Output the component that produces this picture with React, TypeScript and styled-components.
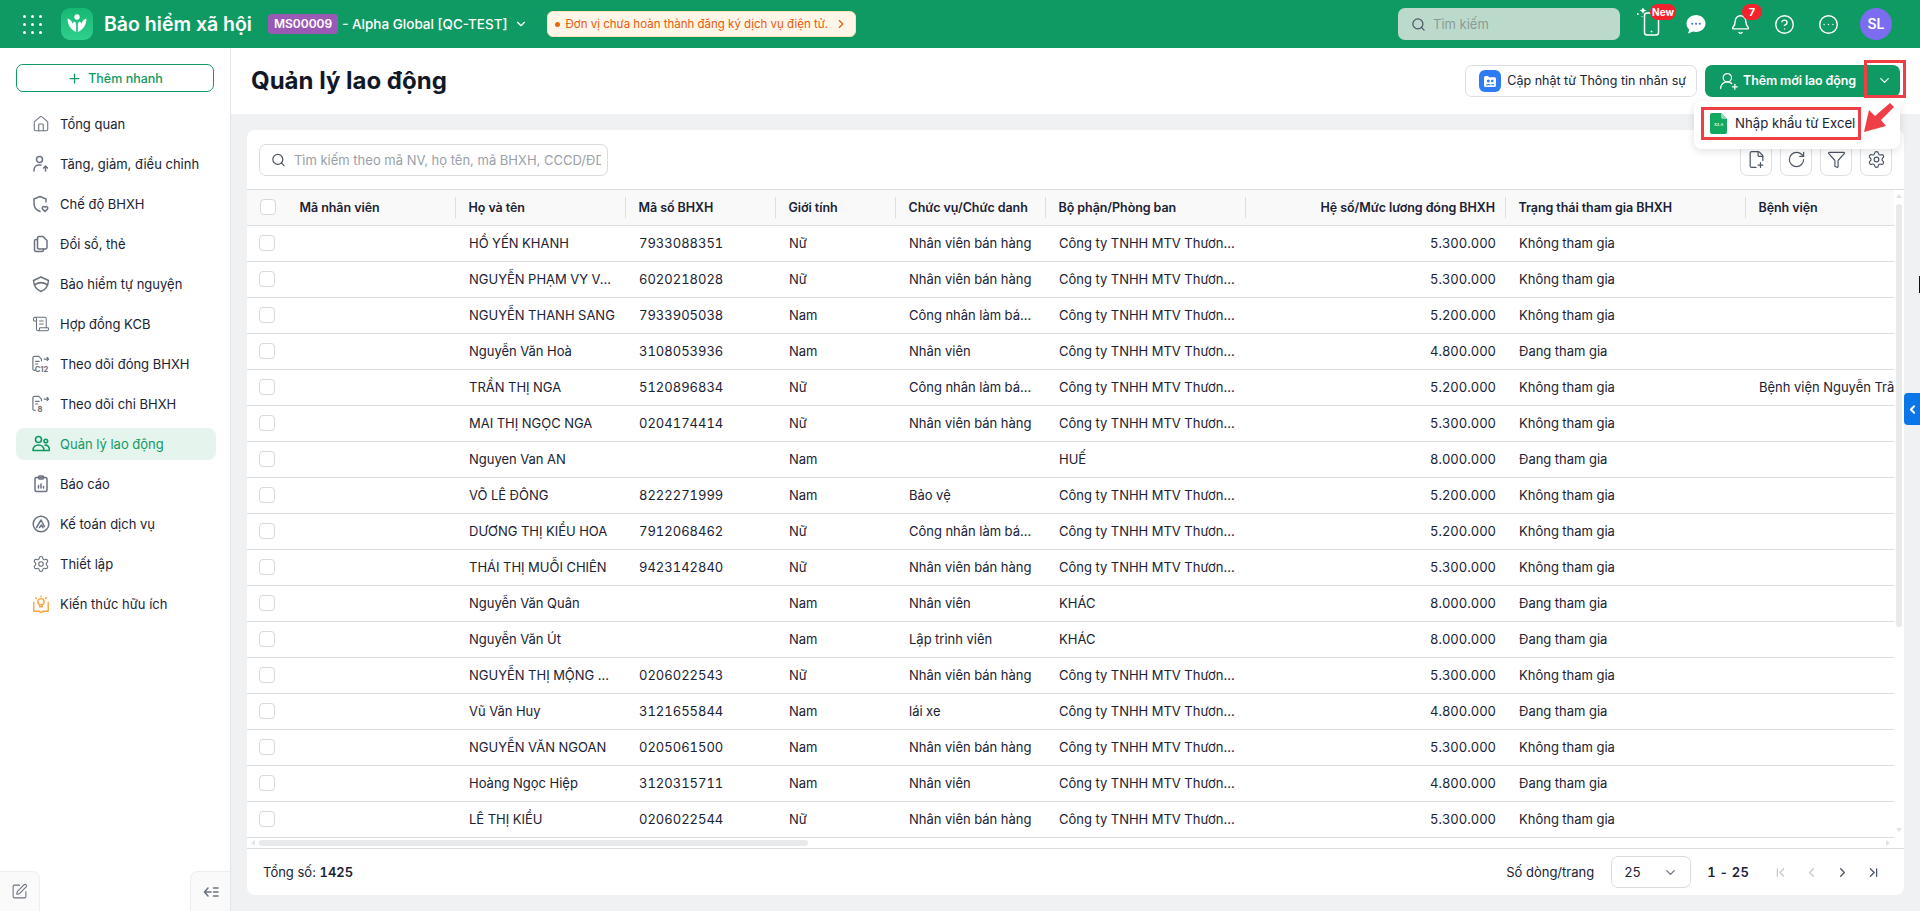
import React from 'react';
import styled, { createGlobalStyle } from 'styled-components';
import {
  Bell,
  ChevronDown,
  ChevronFirst,
  ChevronLast,
  ChevronLeft,
  ChevronRight,
  CircleEllipsis,
  CircleHelp,
  FilePlus2,
  Filter,
  House,
  Plus,
  RotateCw,
  ScrollText,
  Search,
  Settings,
  SquarePen,
  UserRoundPlus,
} from 'lucide-react';

const NVBH = 'Nhân viên bán hàng';
const CNLB = 'Công nhân làm bán hàng';
const NV = 'Nhân viên';
const CTY = 'Công ty TNHH MTV Thương mại';
const KTG = 'Không tham gia';
const DTG = 'Đang tham gia';

type Employee = [string, string, string, string, string, string, string, string?];

const employees: Employee[] = [
  ['HỒ YẾN KHANH', '7933088351', 'Nữ', NVBH, CTY, '5.300.000', KTG],
  ['NGUYỄN PHẠM VY VÂN', '6020218028', 'Nữ', NVBH, CTY, '5.300.000', KTG],
  ['NGUYỄN THANH SANG', '7933905038', 'Nam', CNLB, CTY, '5.200.000', KTG],
  ['Nguyễn Văn Hoà', '3108053936', 'Nam', NV, CTY, '4.800.000', DTG],
  ['TRẦN THỊ NGA', '5120896834', 'Nữ', CNLB, CTY, '5.200.000', KTG, 'Bệnh viện Nguyễn Trãi'],
  ['MAI THỊ NGỌC NGA', '0204174414', 'Nữ', NVBH, CTY, '5.300.000', KTG],
  ['Nguyen Van AN', '', 'Nam', '', 'HUẾ', '8.000.000', DTG],
  ['VÕ LÊ ĐÔNG', '8222271999', 'Nam', 'Bảo vệ', CTY, '5.200.000', KTG],
  ['DƯƠNG THỊ KIỀU HOA', '7912068462', 'Nữ', CNLB, CTY, '5.200.000', KTG],
  ['THÁI THỊ MUỖI CHIÊN', '9423142840', 'Nữ', NVBH, CTY, '5.300.000', KTG],
  ['Nguyễn Văn Quân', '', 'Nam', NV, 'KHÁC', '8.000.000', DTG],
  ['Nguyễn Văn Út', '', 'Nam', 'Lập trình viên', 'KHÁC', '8.000.000', DTG],
  ['NGUYỄN THỊ MỘNG TUYỀN', '0206022543', 'Nữ', NVBH, CTY, '5.300.000', KTG],
  ['Vũ Văn Huy', '3121655844', 'Nam', 'lái xe', CTY, '4.800.000', DTG],
  ['NGUYỄN VĂN NGOAN', '0205061500', 'Nam', NVBH, CTY, '5.300.000', KTG],
  ['Hoàng Ngọc Hiệp', '3120315711', 'Nam', NV, CTY, '4.800.000', DTG],
  ['LÊ THỊ KIỀU', '0206022544', 'Nữ', NVBH, CTY, '5.300.000', KTG],
];

const columnWidths = [40, 169, 170, 150, 120, 150, 200, 260, 240, 220];

const line = { fill: 'none', stroke: 'currentColor', strokeWidth: 1.5, strokeLinecap: 'round', strokeLinejoin: 'round' } as const;

const UserUpIcon = () => (
  <svg width="18" height="18" viewBox="0 0 18 18" {...line}>
    <circle cx="7.5" cy="4.5" r="3" />
    <path d="M2 16v-1.5A5 5 0 0 1 7 10h2" />
    <path d="M13.5 16v-5M11.5 13l2-2 2 2" />
  </svg>
);

const ShieldHeartIcon = () => (
  <svg width="18" height="18" viewBox="0 0 18 18" {...line}>
    <path d="M8 16.5C4 15 2 12 2 8.5V4l6-2.5L14 4v3" />
    <path d="M13 16.5l-2.6-2.6a1.6 1.6 0 0 1 2.6-1.8 1.6 1.6 0 0 1 2.6 1.8z" />
  </svg>
);

const BooksIcon = () => (
  <svg width="18" height="18" viewBox="0 0 18 18" {...line}>
    <path d="M7 1.5h4l4 4v7a1.5 1.5 0 0 1-1.5 1.5H7a1.5 1.5 0 0 1-1.5-1.5V3A1.5 1.5 0 0 1 7 1.5z" />
    <path d="M5.5 4.5H4A1.5 1.5 0 0 0 2.5 6v9A1.5 1.5 0 0 0 4 16.5h6a1.5 1.5 0 0 0 1.5-1.5v-1" />
  </svg>
);

const ShieldIcon = () => (
  <svg width="18" height="18" viewBox="0 0 18 18" {...line}>
    <path d="M9 16.5C5 15 2 12 1.5 5.5L9 2l7.5 3.5C16 12 13 15 9 16.5z" />
    <path d="M3 9.5c4-2.5 8-2.5 12 0" />
  </svg>
);

const FileCodeIcon = ({ code, textX }: { code: string; textX: number }) => (
  <svg width="20" height="20" viewBox="0 0 20 20" {...line} strokeWidth={1.3}>
    <path d="M3.5 17h-1A1.5 1.5 0 0 1 1 15.5V3a1.5 1.5 0 0 1 1.5-1.5h5l3 3v2" />
    <path d="M4 7h4M4 10h2.5M13.5 4.5h5M16.8 2.8l1.7 1.7-1.7 1.7" />
    <text x={textX} y="18.5" fontSize="8.5" fontWeight="700" fill="currentColor" stroke="none" fontFamily="Inter, sans-serif">
      {code}
    </text>
  </svg>
);

const ReportIcon = () => (
  <svg width="18" height="18" viewBox="0 0 18 18" {...line}>
    <rect x="3" y="2.5" width="12" height="14" rx="1.5" />
    <rect x="6.5" y="1" width="5" height="3" rx="1" />
    <path d="M6.5 13v-2.5M9 13V9M11.5 13v-1.5" />
  </svg>
);

const AccountingIcon = () => (
  <svg width="18" height="18" viewBox="0 0 18 18" {...line}>
    <circle cx="9" cy="9" r="7.8" />
    <path d="M4.5 12.5L9 5l3.5 6.5M7.5 12.5l2-2.5 1.5 2.5" />
  </svg>
);

const KnowledgeIcon = () => (
  <svg width="20" height="20" viewBox="0 0 20 20" {...line} stroke="#f9a23b">
    <circle cx="10" cy="7.5" r="3.5" />
    <path d="M8.5 11v2h3v-2M10 1v1M4 3l1 1M16 3l-1 1" />
    <path d="M2 8v10h6.5a1.5 1.5 0 0 0 3 0H18V8" />
  </svg>
);

const WorkersIcon = () => (
  <svg width="18" height="18" viewBox="0 0 18 18" {...line} strokeWidth={1.6}>
    <circle cx="6.5" cy="4.5" r="3" />
    <circle cx="13.8" cy="6" r="1.8" />
    <path d="M1 15.5c0-3.5 2.5-5.5 5.5-5.5s5.5 2 5.5 5.5z" />
    <path d="M13 10.2c2.5-.3 4.5 1.5 4.5 5.3H12" />
  </svg>
);

const CollapseIcon = () => (
  <svg width="16" height="14" viewBox="0 0 16 14" {...line}>
    <path d="M5 3L1.5 7 5 11M1.5 7H8M10.5 3H15M10.5 7H15M10.5 11H15" />
  </svg>
);

const ChatIcon = () => (
  <svg width="20" height="20" viewBox="0 0 20 20">
    <path d="M10 1c5.2 0 9.5 3.7 9.5 8.5S15.2 18 10 18c-1 0-2-.1-2.9-.4L2 19.5l1.3-4C1.4 14 .5 12 .5 9.5.5 4.7 4.8 1 10 1z" fill="#fff" />
    <circle cx="6.2" cy="9.7" r="1" fill="#3568ee" />
    <circle cx="10" cy="9.7" r="1" fill="#3568ee" />
    <circle cx="13.8" cy="9.7" r="1" fill="#3568ee" />
  </svg>
);

const PhoneSparkIcon = () => (
  <svg width="30" height="32" viewBox="0 0 30 32" fill="none">
    <rect x="7.5" y="5" width="14" height="22" rx="2.5" stroke="#fff" strokeWidth="1.5" />
    <path d="M14.5 22.5v2M13.5 23.5h2" stroke="#fff" strokeWidth="0.8" />
    <path d="M6 -1l1 2.5 2.5 1-2.5 1-1 2.5-1-2.5-2.5-1 2.5-1z" fill="#fff" />
    <circle cx="0.8" cy="6" r="1" fill="#fff" />
    <circle cx="5" cy="8.5" r="0.6" fill="#fff" />
  </svg>
);

const LogoMark = () => (
  <svg width="22" height="22" viewBox="0 0 22 22" fill="#fff">
    <circle cx="11" cy="4" r="2.7" />
    <path d="M1.5 5.5c2.8.8 4.5 3 5 5.2.5-.9 1.2-1.7 2-2.1.9.6 1.6 1.5 1.6 2.9v7.500C6.200 17.500 1.500 13 1.500 5.500z" />
    <path d="M20.500 5.500c-2.800.8-4.500 3-5 5.200-.5-.9-1.200-1.700-2-2.100-.9.600-1.600 1.500-1.600 2.900v7.500c3.900-1.500 8.600-6 8.600-13.500z" />
  </svg>
);

const ContactsIcon = () => (
  <svg width="22" height="22" viewBox="0 0 22 22">
    <rect width="22" height="22" rx="6" fill="#2f7bf5" />
    <path d="M5 7.5A1.5 1.5 0 0 1 6.5 6H9l1.2 1.3h5.3A1.5 1.5 0 0 1 17 8.8v6.700a1.500 1.500 0 0 1-1.500 1.500h-9A1.500 1.500 0 0 1 5 15.500z" fill="#fff" />
    <circle cx="9.3" cy="11" r="1.5" fill="#2f7bf5" />
    <circle cx="13.3" cy="11" r="1.3" fill="#2f7bf5" />
    <path d="M6.8 15.3c.4-1.8 4.6-1.8 5 0zM12.5 15.3h2.8c-.2-1.4-1.9-1.7-3.1-1z" fill="#2f7bf5" />
  </svg>
);

const ExcelIcon = () => (
  <svg width="17" height="21" viewBox="0 0 17 21">
    <path d="M2 0h9l6 6v13a2 2 0 0 1-2 2H2a2 2 0 0 1-2-2V2a2 2 0 0 1 2-2z" fill="#12a85f" />
    <path d="M11 0l6 6h-4a2 2 0 0 1-2-2z" fill="#8adbb1" />
    <text x="8.5" y="13" textAnchor="middle" fontSize="5" fontWeight="700" fill="#d8f5e6" fontFamily="Liberation Serif, serif">
      XLS
    </text>
  </svg>
);

const AppsIcon = () => (
  <AppsGrid>
    {Array.from({ length: 9 }, (_, i) => (
      <i key={i} />
    ))}
  </AppsGrid>
);

type NavEntry = { label: string; icon: React.ReactNode; active?: boolean };

const navItems: NavEntry[] = [
  { label: 'Tổng quan', icon: <House size={18} strokeWidth={1.4} /> },
  { label: 'Tăng, giảm, điều chỉnh', icon: <UserUpIcon /> },
  { label: 'Chế độ BHXH', icon: <ShieldHeartIcon /> },
  { label: 'Đổi sổ, thẻ', icon: <BooksIcon /> },
  { label: 'Bảo hiểm tự nguyện', icon: <ShieldIcon /> },
  { label: 'Hợp đồng KCB', icon: <ScrollText size={18} strokeWidth={1.4} /> },
  { label: 'Theo dõi đóng BHXH', icon: <FileCodeIcon code="C12" textX={3} /> },
  { label: 'Theo dõi chi BHXH', icon: <FileCodeIcon code="8" textX={6} /> },
  { label: 'Quản lý lao động', icon: <WorkersIcon />, active: true },
  { label: 'Báo cáo', icon: <ReportIcon /> },
  { label: 'Kế toán dịch vụ', icon: <AccountingIcon /> },
  { label: 'Thiết lập', icon: <Settings size={18} strokeWidth={1.5} /> },
  { label: 'Kiến thức hữu ích', icon: <KnowledgeIcon /> },
];

const App: React.FC = () => (
  <Page>
    <GlobalStyle />
    <TopBar>
      <AppsIcon />
      <Logo>
        <LogoMark />
      </Logo>
      <Brand>Bảo hiểm xã hội</Brand>
      <UnitCode>MS00009</UnitCode>
      <UnitName>- Alpha Global [QC-TEST]</UnitName>
      <ChevronDown size={14} color="#fff" />
      <Notice>
        <NoticeDot />
        Đơn vị chưa hoàn thành đăng ký dịch vụ điện tử.
        <ChevronRight size={14} />
      </Notice>
      <TopSearch>
        <Search size={15} color="#4b5563" />
        Tìm kiếm
      </TopSearch>
      <TopIcons>
        <TopIcon>
          <PhoneSparkIcon />
          <RedBadge $wide>New</RedBadge>
        </TopIcon>
        <TopIcon>
          <ChatIcon />
        </TopIcon>
        <TopIcon>
          <Bell size={21} strokeWidth={1.6} />
          <RedBadge>7</RedBadge>
        </TopIcon>
        <TopIcon>
          <CircleHelp size={21} strokeWidth={1.6} />
        </TopIcon>
        <TopIcon>
          <CircleEllipsis size={21} strokeWidth={1.6} />
        </TopIcon>
      </TopIcons>
      <Avatar>SL</Avatar>
    </TopBar>

    <Body>
      <Sidebar>
        <QuickAdd>
          <Plus size={15} />
          Thêm nhanh
        </QuickAdd>
        <Nav>
          {navItems.map(item => (
            <NavItem key={item.label} $active={item.active}>
              <NavGlyph>{item.icon}</NavGlyph>
              {item.label}
            </NavItem>
          ))}
        </Nav>
        <SideFooter>
          <SideFooterButton $side="left">
            <SquarePen size={17} strokeWidth={1.5} />
          </SideFooterButton>
          <SideFooterButton $side="right">
            <CollapseIcon />
          </SideFooterButton>
        </SideFooter>
      </Sidebar>

      <Main>
        <TitleBar>
          <Title>Quản lý lao động</Title>
          <TitleActions>
            <OutlineButton>
              <ContactsIcon />
              Cập nhật từ Thông tin nhân sự
            </OutlineButton>
            <SplitButton>
              <SplitMain>
                <UserRoundPlus size={20} strokeWidth={1.5} />
                Thêm mới lao động
              </SplitMain>
              <SplitToggle>
                <ChevronDown size={15} />
              </SplitToggle>
              <ToggleMark />
            </SplitButton>
            <ImportMenu>
              <ImportItem>
                <ExcelIcon />
                Nhập khẩu từ Excel
              </ImportItem>
            </ImportMenu>
            <CalloutArrow width="30" height="30" viewBox="0 0 30 30">
              <path d="M26 0l4 4-13 13 5 6-22 6 5-22 6 6z" fill="#f03e46" />
            </CalloutArrow>
          </TitleActions>
        </TitleBar>

        <Content>
          <Card>
            <CardToolbar>
              <TableSearch>
                <Search size={16} color="#4b5563" />
                <TableSearchHint>Tìm kiếm theo mã NV, họ tên, mã BHXH, CCCD/ĐDCN</TableSearchHint>
              </TableSearch>
              <ToolGroup>
                <ToolButton><FilePlus2 size={19} strokeWidth={1.5} /></ToolButton>
                <ToolButton><RotateCw size={19} strokeWidth={1.5} /></ToolButton>
                <ToolButton><Filter size={19} strokeWidth={1.5} /></ToolButton>
                <ToolButton><Settings size={19} strokeWidth={1.5} /></ToolButton>
              </ToolGroup>
            </CardToolbar>

            <TableArea>
              <TableClip>
                <Table>
                  <colgroup>
                    {columnWidths.map((w, i) => (
                      <col key={i} style={{ width: w }} />
                    ))}
                  </colgroup>
                  <thead>
                    <tr>
                      <HeadCell $plain><Check /></HeadCell>
                      <HeadCell>Mã nhân viên</HeadCell>
                      <HeadCell>Họ và tên</HeadCell>
                      <HeadCell>Mã số BHXH</HeadCell>
                      <HeadCell>Giới tính</HeadCell>
                      <HeadCell>Chức vụ/Chức danh</HeadCell>
                      <HeadCell>Bộ phận/Phòng ban</HeadCell>
                      <HeadCell $right>Hệ số/Mức lương đóng BHXH</HeadCell>
                      <HeadCell>Trạng thái tham gia BHXH</HeadCell>
                      <HeadCell $plain>Bệnh viện</HeadCell>
                    </tr>
                  </thead>
                  <tbody>
                    {employees.map(([name, code, gender, role, dept, salary, status, hospital]) => (
                      <tr key={name}>
                        <Cell $box><Check /></Cell>
                        <Cell />
                        <Cell>{name}</Cell>
                        <Cell>{code}</Cell>
                        <Cell>{gender}</Cell>
                        <Cell>{role}</Cell>
                        <Cell>{dept}</Cell>
                        <Cell $right>{salary}</Cell>
                        <Cell>{status}</Cell>
                        <Cell $clip>{hospital}</Cell>
                      </tr>
                    ))}
                  </tbody>
                </Table>
              </TableClip>
              <VScroll>
                <ArrowUp />
                <VThumb />
                <ArrowDown />
              </VScroll>
            </TableArea>
            <HScroll>
              <ArrowLeft />
              <HThumb />
              <ArrowRight />
            </HScroll>

            <CardFooter>
              <Total>
                Tổng số: <b>1425</b>
              </Total>
              <Pager>
                Số dòng/trang
                <PageSize>
                  25
                  <ChevronDown size={15} color="#6b7280" />
                </PageSize>
                <PageRange>1 - 25</PageRange>
                <PageNav>
                  <ChevronFirst size={15} color="#c6c9cf" />
                  <ChevronLeft size={15} color="#c6c9cf" />
                  <ChevronRight size={15} color="#4b5563" />
                  <ChevronLast size={15} color="#4b5563" />
                </PageNav>
              </Pager>
            </CardFooter>
          </Card>
        </Content>
      </Main>
    </Body>

    <SideTab>
      <ChevronLeft size={13} strokeWidth={3.5} />
    </SideTab>
    <CaretMark />
  </Page>
);

export default App;

const GlobalStyle = createGlobalStyle`
  html, body {
    margin: 0;
    height: 100%;
    overflow: hidden;
  }

  * {
    box-sizing: border-box;
  }

  body {
    font-family: Inter, "Noto Sans", sans-serif;
    font-size: 13px;
    color: #1a2233;
    background: #fff;
  }
`;

const Page = styled.div`
  position: relative;
  display: flex;
  flex-direction: column;
  height: 100vh;
`;

const TopBar = styled.header`
  display: flex;
  align-items: center;
  flex: 0 0 48px;
  padding: 0 28px 0 23px;
  background: #0f9a63;
  color: #fff;
`;

const AppsGrid = styled.div`
  display: grid;
  grid-template-columns: repeat(3, 3px);
  gap: 5px;
  margin-right: 19px;

  & i {
    width: 3px;
    height: 3px;
    border-radius: 50%;
    background: #fff;
  }
`;

const Logo = styled.div`
  display: flex;
  align-items: center;
  justify-content: center;
  width: 32px;
  height: 32px;
  border-radius: 9px;
  background: linear-gradient(180deg, #17b873, #2fcf8d);
`;

const Brand = styled.div`
  margin-left: 11px;
  font-size: 19.5px;
  font-weight: 600;
  white-space: nowrap;
`;

const UnitCode = styled.span`
  margin-left: 16px;
  padding: 3px 6px;
  border-radius: 4px;
  background: #9b59b6;
  font-size: 12px;
  font-weight: 600;
  line-height: 14px;
`;

const UnitName = styled.span`
  margin: 0 6px 0 4px;
  font-size: 13.5px;
  font-weight: 500;
  white-space: nowrap;
`;

const Notice = styled.div`
  display: flex;
  align-items: center;
  gap: 6px;
  height: 26px;
  margin-left: 19px;
  padding: 0 7px;
  border: 1px solid #fde2b3;
  border-radius: 6px;
  background: #fff6e8;
  color: #e8590c;
  font-size: 11.5px;
  white-space: nowrap;
`;

const NoticeDot = styled.span`
  width: 5px;
  height: 5px;
  border-radius: 50%;
  background: #e8690c;
`;

const TopSearch = styled.div`
  display: flex;
  align-items: center;
  gap: 7px;
  width: 222px;
  height: 32px;
  margin-left: auto;
  padding: 0 13px;
  border-radius: 7px;
  background: #bcdacc;
  color: #8a9a94;
  font-size: 13px;
`;

const TopIcons = styled.div`
  display: flex;
  align-items: center;
  margin-left: 10px;
`;

const TopIcon = styled.div`
  position: relative;
  display: flex;
  align-items: center;
  justify-content: center;
  width: 44px;
  height: 48px;
`;

const RedBadge = styled.span<{ $wide?: boolean }>`
  position: absolute;
  top: 4px;
  left: ${p => (p.$wide ? '20px' : '24px')};
  min-width: ${p => (p.$wide ? '26px' : '20px')};
  height: 16px;
  border-radius: 8px;
  background: #f5222d;
  font-size: ${p => (p.$wide ? '10px' : '11px')};
  font-weight: 700;
  line-height: 16px;
  text-align: center;
`;

const Avatar = styled.div`
  width: 32px;
  height: 32px;
  margin-left: 10px;
  border-radius: 50%;
  background: #7b6cf0;
  font-size: 14px;
  font-weight: 600;
  line-height: 32px;
  text-align: center;
`;

const Body = styled.div`
  display: flex;
  flex: 1;
  min-height: 0;
`;

const Sidebar = styled.aside`
  display: flex;
  flex-direction: column;
  flex: 0 0 231px;
  border-right: 1px solid #e3e5e8;
`;

const QuickAdd = styled.button`
  display: flex;
  align-items: center;
  justify-content: center;
  gap: 6px;
  height: 28px;
  margin: 16px 16px 0;
  border: 1px solid #0f9a63;
  border-radius: 7px;
  background: #fff;
  color: #0f9a63;
  font: 500 12.5px Inter, sans-serif;
`;

const Nav = styled.nav`
  display: flex;
  flex-direction: column;
  gap: 8px;
  margin-top: 8px;
  padding: 8px 14px 0 16px;
`;

const NavItem = styled.a<{ $active?: boolean }>`
  display: flex;
  align-items: center;
  gap: 10px;
  height: 32px;
  padding-left: 16px;
  border-radius: 8px;
  background: ${p => (p.$active ? '#e6f4ee' : 'transparent')};
  color: ${p => (p.$active ? '#0f9a63' : '#1a2233')};
  font-size: 13px;

  & svg {
    color: ${p => (p.$active ? '#0f9a63' : '#6b7280')};
  }
`;

const NavGlyph = styled.span`
  display: flex;
  align-items: center;
  justify-content: center;
  width: 18px;
`;

const SideFooter = styled.div`
  display: flex;
  justify-content: space-between;
  margin-top: auto;
`;

const SideFooterButton = styled.button<{ $side: 'left' | 'right' }>`
  display: flex;
  align-items: center;
  justify-content: center;
  width: 40px;
  height: 40px;
  padding: 0;
  border: 1px solid #eceef0;
  border-width: ${p => (p.$side === 'left' ? '1px 1px 0 0' : '1px 0 0 1px')};
  border-radius: ${p => (p.$side === 'left' ? '0 8px 0 0' : '8px 0 0 0')};
  background: #fafafa;
  color: #6b7280;
`;

const Main = styled.main`
  display: flex;
  flex-direction: column;
  flex: 1;
  min-width: 0;
`;

const TitleBar = styled.div`
  display: flex;
  align-items: center;
  justify-content: space-between;
  flex: 0 0 66px;
  padding: 0 20px 0 20px;
  background: #fff;
`;

const Title = styled.h1`
  margin: 0 0 2px;
  font-size: 24px;
  font-weight: 700;
  color: #111827;
`;

const TitleActions = styled.div`
  position: relative;
  display: flex;
  gap: 8px;
  margin-top: -1px;
  z-index: 2;
`;

const OutlineButton = styled.button`
  display: flex;
  align-items: center;
  gap: 6px;
  height: 32px;
  padding: 0 10px 0 13px;
  border: 1px solid #dcdfe3;
  border-radius: 7px;
  background: #fff;
  color: #1a2233;
  font: 400 12.5px Inter, sans-serif;
`;

const SplitButton = styled.div`
  position: relative;
  display: flex;
  width: 195px;
  height: 32px;
  border-radius: 7px;
  background: #0f9a63;
  color: #fff;
`;

const SplitMain = styled.div`
  display: flex;
  align-items: center;
  flex: 1;
  gap: 4px;
  padding-left: 14px;
  font-size: 12.5px;
  font-weight: 600;
  letter-spacing: -0.12px;
  white-space: nowrap;
`;

const SplitToggle = styled.div`
  display: flex;
  align-items: center;
  justify-content: center;
  flex: 0 0 32px;
`;

const ToggleMark = styled.div`
  position: absolute;
  top: -5px;
  right: -6px;
  width: 42px;
  height: 38px;
  border: 3px solid #f03e46;
`;

const ImportMenu = styled.div`
  position: absolute;
  top: 36px;
  right: 0;
  width: 206px;
  height: 48px;
  padding: 6px 7px;
  border-radius: 8px;
  background: #fff;
  box-shadow: 0 2px 8px rgba(0, 0, 0, 0.12);
`;

const ImportItem = styled.div`
  display: flex;
  align-items: center;
  gap: 8px;
  width: 160px;
  height: 33px;
  padding-left: 6px;
  border: 3px solid #f03e46;
  font-size: 13.2px;
  white-space: nowrap;

  & svg {
    flex: none;
  }
`;

const CalloutArrow = styled.svg`
  position: absolute;
  top: 38px;
  right: 6px;
`;

const Content = styled.div`
  flex: 1;
  min-height: 0;
  padding: 16px;
  background: #f0f1f3;
`;

const Card = styled.section`
  display: flex;
  flex-direction: column;
  height: 100%;
  border-radius: 8px;
  background: #fff;
  overflow: hidden;
`;

const CardToolbar = styled.div`
  display: flex;
  align-items: center;
  justify-content: space-between;
  flex: 0 0 59px;
  padding: 0 12px;
`;

const TableSearch = styled.div`
  display: flex;
  align-items: center;
  gap: 8px;
  width: 349px;
  height: 32px;
  padding: 0 6px 0 11px;
  border: 1px solid #d8dbdf;
  border-radius: 7px;
`;

const TableSearchHint = styled.span`
  overflow: hidden;
  color: #9aa0a8;
  font-size: 13px;
  white-space: nowrap;
`;

const ToolGroup = styled.div`
  display: flex;
  gap: 8px;
`;

const ToolButton = styled.button`
  display: flex;
  align-items: center;
  justify-content: center;
  width: 32px;
  height: 32px;
  padding: 0;
  border: 1px solid #dcdfe3;
  border-radius: 7px;
  background: #fff;
  color: #4b5563;
`;

const TableArea = styled.div`
  display: flex;
  flex: 0 0 649px;
  border-top: 1px solid #dcdee2;
`;

const TableClip = styled.div`
  flex: 1;
  min-width: 0;
  overflow: hidden;
`;

const Table = styled.table`
  width: 1719px;
  border-spacing: 0;
  table-layout: fixed;
`;

const HeadCell = styled.th<{ $right?: boolean; $plain?: boolean }>`
  position: relative;
  height: 36px;
  padding: 0 ${p => (p.$right ? '11px' : '17px')} 1px 12.5px;
  border-bottom: 1px solid #dcdee2;
  background: #f9f9fa;
  font-size: 12.5px;
  font-weight: 600;
  letter-spacing: -0.06px;
  text-align: ${p => (p.$right ? 'right' : 'left')};
  overflow: hidden;
  text-overflow: ellipsis;
  white-space: nowrap;

  &::after {
    content: '';
    display: ${p => (p.$plain ? 'none' : 'block')};
    position: absolute;
    top: 7px;
    right: 0;
    width: 1px;
    height: 21px;
    background: #dcdee2;
  }
`;

const Cell = styled.td<{ $right?: boolean; $clip?: boolean; $box?: boolean }>`
  height: 36px;
  padding: 0 10px 1px ${p => (p.$box ? '12px' : '13px')};
  border-bottom: 1px solid #dcdee2;
  font-size: 13px;
  font-weight: 400;
  font-variant-numeric: tabular-nums;
  text-align: ${p => (p.$right ? 'right' : 'left')};
  overflow: hidden;
  text-overflow: ${p => (p.$clip ? 'clip' : 'ellipsis')};
  white-space: nowrap;
`;

const Check = styled.div`
  width: 16px;
  height: 16px;
  border: 1.5px solid #d5d8dc;
  border-radius: 4px;
  background: #fff;
`;

const VScroll = styled.div`
  display: flex;
  flex-direction: column;
  align-items: center;
  flex: 0 0 10px;
  padding: 2px 0;
`;

const VThumb = styled.div`
  width: 6px;
  height: 423px;
  margin-top: 6px;
  border-radius: 3px;
  background: #e8e9eb;
`;

const ArrowUp = styled.i`
  margin-top: 2px;
  border: 3px solid transparent;
  border-top: 0;
  border-bottom: 4px solid #e2e3e6;
`;

const ArrowDown = styled.i`
  margin-top: auto;
  margin-bottom: 4px;
  border: 3px solid transparent;
  border-bottom: 0;
  border-top: 4px solid #e2e3e6;
`;

const HScroll = styled.div`
  display: flex;
  align-items: center;
  flex: 0 0 10px;
  padding: 0 14px 0 4px;
`;

const HThumb = styled.div`
  width: 549px;
  height: 6px;
  margin-left: 4px;
  border-radius: 3px;
  background: #e8e9eb;
`;

const ArrowLeft = styled.i`
  border: 3px solid transparent;
  border-left: 0;
  border-right: 4px solid #e2e3e6;
`;

const ArrowRight = styled.i`
  margin-left: auto;
  border: 3px solid transparent;
  border-right: 0;
  border-left: 4px solid #e2e3e6;
`;

const CardFooter = styled.div`
  display: flex;
  align-items: center;
  justify-content: space-between;
  flex: 1;
  padding: 0 23px 0 16px;
  border-top: 1px solid #dcdee2;
`;

const Total = styled.div`
  & b {
    font-weight: 600;
    font-variant-numeric: tabular-nums;
  }
`;

const Pager = styled.div`
  display: flex;
  align-items: center;
`;

const PageSize = styled.div`
  display: flex;
  align-items: center;
  justify-content: space-between;
  width: 80px;
  height: 32px;
  margin-left: 17px;
  padding: 0 12px;
  border: 1px solid #d8dbdf;
  border-radius: 7px;
  font-variant-numeric: tabular-nums;
`;

const PageRange = styled.div`
  margin-left: 16px;
  font-weight: 600;
  font-variant-numeric: tabular-nums;
  letter-spacing: 0.2px;
`;

const PageNav = styled.div`
  display: flex;
  gap: 16px;
  margin-left: 24px;
`;

const SideTab = styled.div`
  position: absolute;
  top: 393px;
  right: 0;
  display: flex;
  align-items: center;
  justify-content: center;
  width: 16px;
  height: 32px;
  border-radius: 4px 0 0 4px;
  background: #0b76e8;
  color: #fff;
`;

const CaretMark = styled.div`
  position: absolute;
  top: 276px;
  right: 0;
  width: 1px;
  height: 17px;
  background: #111;
`;
